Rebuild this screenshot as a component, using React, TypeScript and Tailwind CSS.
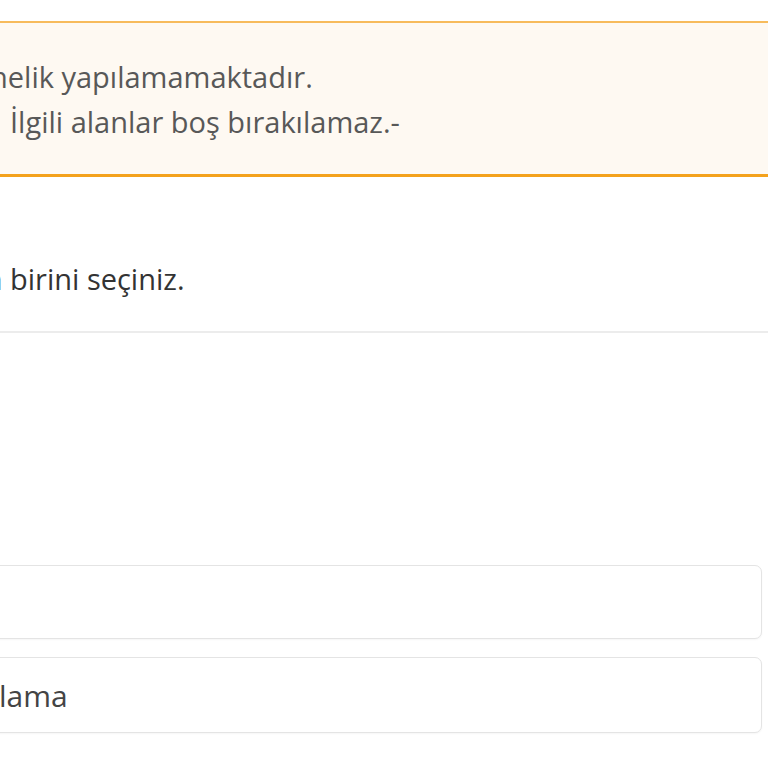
export default function App() {
  return (
    <div
      className="h-[768px] w-[768px] overflow-hidden bg-white pt-[21px]"
      style={{ fontFamily: '"Open Sans", "Noto Sans", sans-serif' }}
    >
      {/* uyarı kutusu */}
      <div className="-ml-[40px] -mr-[40px] border-t-2 border-b-[3px] border-t-[#f7bb5c] border-b-[#f4a21c] bg-[#fef9f2] pt-[31px] pb-[30px] text-[29px] leading-[45px] text-[#585858]">
        <div className="flex whitespace-nowrap">
          <span className="-ml-[500px] w-[530px] shrink-0 text-right">Bu hizmete yö</span>
          <span>nelik yapılamamaktadır.</span>
        </div>
        <div className="flex whitespace-nowrap">
          <span className="-ml-[500px] w-[550px] shrink-0 text-right">Bilgilerinizi kontrol ediniz.{"\u00a0\u00a0"}</span>
          <span>İlgili alanlar boş bırakılamaz.-</span>
        </div>
      </div>

      <div className="mt-[79px] flex whitespace-nowrap text-[29px] leading-[45px] text-[#333333]">
        <span className="-ml-[500px] w-[510px] shrink-0 text-right">Aşağıdakilerden{"\u00a0"}</span>
        <span>birini seçiniz.</span>
      </div>

      <div className="mt-[30px] h-[2px] w-full bg-[#ececec]" />

      {/* form alanları */}
      <div className="mt-[232px] -ml-[30px] mr-[6px] flex flex-col gap-[18px]">
        <div className="h-[74px] rounded-[7px] border border-[#e4e4e4] bg-white shadow-[0_1px_2px_rgba(0,0,0,0.04)]" />
        <div className="flex h-[76px] items-center overflow-hidden whitespace-nowrap rounded-[7px] border border-[#e4e4e4] bg-white text-[30px] text-[#444444] shadow-[0_1px_2px_rgba(0,0,0,0.04)]">
          <span className="-ml-[300px] w-[328px] shrink-0 text-right">Açık</span>
          <span>lama</span>
        </div>
      </div>
    </div>
  )
}
